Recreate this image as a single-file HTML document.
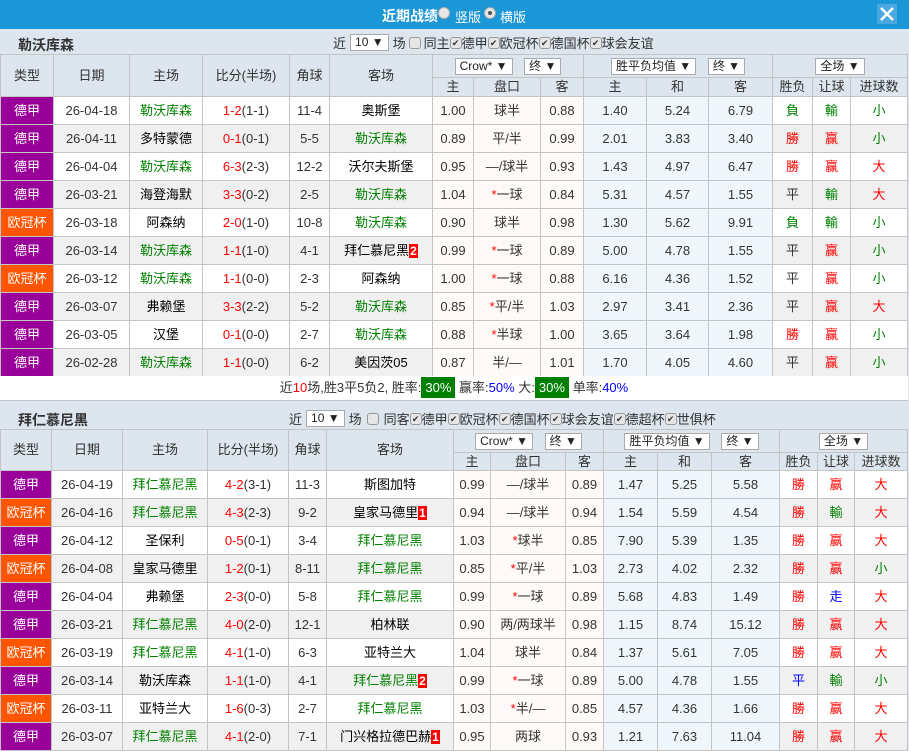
<!DOCTYPE html>
<html><head><meta charset="utf-8"><style>
*{margin:0;padding:0;box-sizing:border-box}
body{width:909px;height:750px;overflow:hidden;background:#dde5ee;font-family:"Liberation Sans","Noto Sans CJK SC",sans-serif;font-size:13px;color:#333;position:relative}
.top{position:absolute;left:0;top:0;width:909px;height:29px;background:#1b96d6;color:#fff}
.ttl{position:absolute;left:382px;top:6px;font-weight:bold;font-size:14px}
.rad{position:absolute;top:7px;width:12px;height:12px;border-radius:50%;background:#e8e8e8;border:1px solid #aaa}
.rad.on::after{content:"";position:absolute;left:3px;top:3px;width:4px;height:4px;border-radius:50%;background:#555}
.lbl{position:absolute;top:7px;font-size:13px}
.x{position:absolute;left:877px;top:4px;width:20px;height:20px;background:#4aa8e0}
.sec{position:absolute;left:0;width:909px}
.name{position:absolute;left:18px;font-weight:bold;font-size:14px;color:#333}
.ctl{position:absolute;font-size:13px;white-space:nowrap;display:flex;align-items:center}
.sel{display:inline-block;vertical-align:middle;background:#fff;border:1px solid #aaa;height:17px;line-height:15px;padding:0 4px;font-size:12px;margin:0 4px;color:#222}
.cb{display:inline-block;width:12px;height:12px;border:1px solid #999;border-radius:3px;background:#e6e6e6;vertical-align:middle;font-size:9px;line-height:10px;text-align:center;color:#333}
table{position:absolute;left:0;border-collapse:collapse;table-layout:fixed;width:908px}
td{border:1px solid #c4c4c4;text-align:center;padding:0;white-space:nowrap;overflow:hidden;line-height:15px}
.h td{background:#dde5ee;color:#333;line-height:14px}
tr.d{height:28px}
tr.d td{background:#fff}
tr.d.e td{background:#f0f0f0}
tr.d td.o1{background:#fffaf7}
tr.d td.o2{background:#f0f7fc}
tr.d td.lg{background:#990099;color:#fff}
tr.d td.lg.c{background:#ff5500}
.g{color:#008000}.r{color:#f00}.b{color:#00f}.k{color:#000}
.n{background:#f00;color:#fff;font-weight:bold;padding:0 1px;font-size:12px}
.sum{position:absolute;left:0;top:376px;width:908px;height:25px;background:#fff;border-bottom:1px solid #c4c4c4;text-align:center;line-height:24px}
.gb{background:#008000;color:#fff;padding:3px 4px}
</style></head><body>
<div class="top">
<span class="ttl">近期战绩</span>
<span class="rad" style="left:438px"></span><span class="lbl" style="left:455px">竖版</span>
<span class="rad on" style="left:484px"></span><span class="lbl" style="left:500px">横版</span>
<div class="x"><svg width="20" height="20"><path d="M4 4L16 16M16 4L4 16" stroke="#fff" stroke-width="2.5"/></svg></div>
</div>

<div class="sec" style="top:29px;height:25px">
<span class="name" style="top:6px">勒沃库森</span>
<div class="ctl" style="left:333px;top:4px">近<span class="sel">10 ▼</span>场 <span class="cb" style="margin:0 3px"></span>同主<span class="cb">✔</span>德甲<span class="cb">✔</span>欧冠杯<span class="cb">✔</span>德国杯<span class="cb">✔</span>球会友谊</div>
</div>

<table style="top:54px">
<colgroup><col width="53"><col width="76"><col width="73"><col width="87"><col width="40"><col width="103"><col width="41"><col width="67"><col width="43"><col width="63"><col width="62"><col width="64"><col width="40"><col width="38"><col width="57"></colgroup>
<tr class="h" style="height:23px"><td rowspan="2">类型</td><td rowspan="2">日期</td><td rowspan="2">主场</td><td rowspan="2">比分(半场)</td><td rowspan="2">角球</td><td rowspan="2">客场</td><td colspan="3"><span class="sel">Crow* ▼</span> <span class="sel">终 ▼</span></td><td colspan="3"><span class="sel">胜平负均值 ▼</span> <span class="sel">终 ▼</span></td><td colspan="3"><span class="sel">全场 ▼</span></td></tr>
<tr class="h" style="height:19px"><td>主</td><td>盘口</td><td>客</td><td>主</td><td>和</td><td>客</td><td>胜负</td><td>让球</td><td>进球数</td></tr>
<tr class="d"><td class="lg">德甲</td><td>26-04-18</td><td class="g">勒沃库森</td><td><span class="r">1-2</span>(1-1)</td><td>11-4</td><td class="k">奥斯堡</td><td class="o1">1.00</td><td class="o1">球半</td><td class="o1">0.88</td><td class="o2">1.40</td><td class="o2">5.24</td><td class="o2">6.79</td><td class="g">負</td><td class="g">輸</td><td class="g">小</td></tr>
<tr class="d e"><td class="lg">德甲</td><td>26-04-11</td><td class="k">多特蒙德</td><td><span class="r">0-1</span>(0-1)</td><td>5-5</td><td class="g">勒沃库森</td><td class="o1">0.89</td><td class="o1">平/半</td><td class="o1">0.99</td><td class="o2">2.01</td><td class="o2">3.83</td><td class="o2">3.40</td><td class="r">勝</td><td class="r">赢</td><td class="g">小</td></tr>
<tr class="d"><td class="lg">德甲</td><td>26-04-04</td><td class="g">勒沃库森</td><td><span class="r">6-3</span>(2-3)</td><td>12-2</td><td class="k">沃尔夫斯堡</td><td class="o1">0.95</td><td class="o1">—/球半</td><td class="o1">0.93</td><td class="o2">1.43</td><td class="o2">4.97</td><td class="o2">6.47</td><td class="r">勝</td><td class="r">赢</td><td class="r">大</td></tr>
<tr class="d e"><td class="lg">德甲</td><td>26-03-21</td><td class="k">海登海默</td><td><span class="r">3-3</span>(0-2)</td><td>2-5</td><td class="g">勒沃库森</td><td class="o1">1.04</td><td class="o1"><span class="r">*</span>一球</td><td class="o1">0.84</td><td class="o2">5.31</td><td class="o2">4.57</td><td class="o2">1.55</td><td>平</td><td class="g">輸</td><td class="r">大</td></tr>
<tr class="d"><td class="lg c">欧冠杯</td><td>26-03-18</td><td class="k">阿森纳</td><td><span class="r">2-0</span>(1-0)</td><td>10-8</td><td class="g">勒沃库森</td><td class="o1">0.90</td><td class="o1">球半</td><td class="o1">0.98</td><td class="o2">1.30</td><td class="o2">5.62</td><td class="o2">9.91</td><td class="g">負</td><td class="g">輸</td><td class="g">小</td></tr>
<tr class="d e"><td class="lg">德甲</td><td>26-03-14</td><td class="g">勒沃库森</td><td><span class="r">1-1</span>(1-0)</td><td>4-1</td><td class="k">拜仁慕尼黑<span class="n">2</span></td><td class="o1">0.99</td><td class="o1"><span class="r">*</span>一球</td><td class="o1">0.89</td><td class="o2">5.00</td><td class="o2">4.78</td><td class="o2">1.55</td><td>平</td><td class="r">赢</td><td class="g">小</td></tr>
<tr class="d"><td class="lg c">欧冠杯</td><td>26-03-12</td><td class="g">勒沃库森</td><td><span class="r">1-1</span>(0-0)</td><td>2-3</td><td class="k">阿森纳</td><td class="o1">1.00</td><td class="o1"><span class="r">*</span>一球</td><td class="o1">0.88</td><td class="o2">6.16</td><td class="o2">4.36</td><td class="o2">1.52</td><td>平</td><td class="r">赢</td><td class="g">小</td></tr>
<tr class="d e"><td class="lg">德甲</td><td>26-03-07</td><td class="k">弗赖堡</td><td><span class="r">3-3</span>(2-2)</td><td>5-2</td><td class="g">勒沃库森</td><td class="o1">0.85</td><td class="o1"><span class="r">*</span>平/半</td><td class="o1">1.03</td><td class="o2">2.97</td><td class="o2">3.41</td><td class="o2">2.36</td><td>平</td><td class="r">赢</td><td class="r">大</td></tr>
<tr class="d"><td class="lg">德甲</td><td>26-03-05</td><td class="k">汉堡</td><td><span class="r">0-1</span>(0-0)</td><td>2-7</td><td class="g">勒沃库森</td><td class="o1">0.88</td><td class="o1"><span class="r">*</span>半球</td><td class="o1">1.00</td><td class="o2">3.65</td><td class="o2">3.64</td><td class="o2">1.98</td><td class="r">勝</td><td class="r">赢</td><td class="g">小</td></tr>
<tr class="d e"><td class="lg">德甲</td><td>26-02-28</td><td class="g">勒沃库森</td><td><span class="r">1-1</span>(0-0)</td><td>6-2</td><td class="k">美因茨05</td><td class="o1">0.87</td><td class="o1">半/—</td><td class="o1">1.01</td><td class="o2">1.70</td><td class="o2">4.05</td><td class="o2">4.60</td><td>平</td><td class="r">赢</td><td class="g">小</td></tr>
</table>

<div class="sum">近<span class="r">10</span>场,胜3平5负2, 胜率:<span class="gb">30%</span> 赢率:<span class="b">50%</span> 大:<span class="gb">30%</span> 单率:<span class="b">40%</span></div>

<div class="sec" style="top:402px;height:27px">
<span class="name" style="top:8px">拜仁慕尼黑</span>
<div class="ctl" style="left:289px;top:7px">近<span class="sel">10 ▼</span>场 <span class="cb" style="margin:0 5px"></span>同客 <span class="cb">✔</span>德甲<span class="cb">✔</span>欧冠杯<span class="cb">✔</span>德国杯<span class="cb">✔</span>球会友谊<span class="cb">✔</span>德超杯<span class="cb">✔</span>世俱杯</div>
</div>

<table style="top:429px">
<colgroup><col width="51"><col width="71"><col width="85"><col width="81"><col width="38"><col width="127"><col width="37"><col width="75"><col width="38"><col width="54"><col width="54"><col width="68"><col width="38"><col width="37"><col width="53"></colgroup>
<tr class="h" style="height:23px"><td rowspan="2">类型</td><td rowspan="2">日期</td><td rowspan="2">主场</td><td rowspan="2">比分(半场)</td><td rowspan="2">角球</td><td rowspan="2">客场</td><td colspan="3"><span class="sel">Crow* ▼</span> <span class="sel">终 ▼</span></td><td colspan="3"><span class="sel">胜平负均值 ▼</span> <span class="sel">终 ▼</span></td><td colspan="3"><span class="sel">全场 ▼</span></td></tr>
<tr class="h" style="height:18px"><td>主</td><td>盘口</td><td>客</td><td>主</td><td>和</td><td>客</td><td>胜负</td><td>让球</td><td>进球数</td></tr>
<tr class="d"><td class="lg">德甲</td><td>26-04-19</td><td class="g">拜仁慕尼黑</td><td><span class="r">4-2</span>(3-1)</td><td>11-3</td><td class="k">斯图加特</td><td class="o1">0.99</td><td class="o1">—/球半</td><td class="o1">0.89</td><td class="o2">1.47</td><td class="o2">5.25</td><td class="o2">5.58</td><td class="r">勝</td><td class="r">赢</td><td class="r">大</td></tr>
<tr class="d e"><td class="lg c">欧冠杯</td><td>26-04-16</td><td class="g">拜仁慕尼黑</td><td><span class="r">4-3</span>(2-3)</td><td>9-2</td><td class="k">皇家马德里<span class="n">1</span></td><td class="o1">0.94</td><td class="o1">—/球半</td><td class="o1">0.94</td><td class="o2">1.54</td><td class="o2">5.59</td><td class="o2">4.54</td><td class="r">勝</td><td class="g">輸</td><td class="r">大</td></tr>
<tr class="d"><td class="lg">德甲</td><td>26-04-12</td><td class="k">圣保利</td><td><span class="r">0-5</span>(0-1)</td><td>3-4</td><td class="g">拜仁慕尼黑</td><td class="o1">1.03</td><td class="o1"><span class="r">*</span>球半</td><td class="o1">0.85</td><td class="o2">7.90</td><td class="o2">5.39</td><td class="o2">1.35</td><td class="r">勝</td><td class="r">赢</td><td class="r">大</td></tr>
<tr class="d e"><td class="lg c">欧冠杯</td><td>26-04-08</td><td class="k">皇家马德里</td><td><span class="r">1-2</span>(0-1)</td><td>8-11</td><td class="g">拜仁慕尼黑</td><td class="o1">0.85</td><td class="o1"><span class="r">*</span>平/半</td><td class="o1">1.03</td><td class="o2">2.73</td><td class="o2">4.02</td><td class="o2">2.32</td><td class="r">勝</td><td class="r">赢</td><td class="g">小</td></tr>
<tr class="d"><td class="lg">德甲</td><td>26-04-04</td><td class="k">弗赖堡</td><td><span class="r">2-3</span>(0-0)</td><td>5-8</td><td class="g">拜仁慕尼黑</td><td class="o1">0.99</td><td class="o1"><span class="r">*</span>一球</td><td class="o1">0.89</td><td class="o2">5.68</td><td class="o2">4.83</td><td class="o2">1.49</td><td class="r">勝</td><td class="b">走</td><td class="r">大</td></tr>
<tr class="d e"><td class="lg">德甲</td><td>26-03-21</td><td class="g">拜仁慕尼黑</td><td><span class="r">4-0</span>(2-0)</td><td>12-1</td><td class="k">柏林联</td><td class="o1">0.90</td><td class="o1">两/两球半</td><td class="o1">0.98</td><td class="o2">1.15</td><td class="o2">8.74</td><td class="o2">15.12</td><td class="r">勝</td><td class="r">赢</td><td class="r">大</td></tr>
<tr class="d"><td class="lg c">欧冠杯</td><td>26-03-19</td><td class="g">拜仁慕尼黑</td><td><span class="r">4-1</span>(1-0)</td><td>6-3</td><td class="k">亚特兰大</td><td class="o1">1.04</td><td class="o1">球半</td><td class="o1">0.84</td><td class="o2">1.37</td><td class="o2">5.61</td><td class="o2">7.05</td><td class="r">勝</td><td class="r">赢</td><td class="r">大</td></tr>
<tr class="d e"><td class="lg">德甲</td><td>26-03-14</td><td class="k">勒沃库森</td><td><span class="r">1-1</span>(1-0)</td><td>4-1</td><td class="g">拜仁慕尼黑<span class="n">2</span></td><td class="o1">0.99</td><td class="o1"><span class="r">*</span>一球</td><td class="o1">0.89</td><td class="o2">5.00</td><td class="o2">4.78</td><td class="o2">1.55</td><td class="b">平</td><td class="g">輸</td><td class="g">小</td></tr>
<tr class="d"><td class="lg c">欧冠杯</td><td>26-03-11</td><td class="k">亚特兰大</td><td><span class="r">1-6</span>(0-3)</td><td>2-7</td><td class="g">拜仁慕尼黑</td><td class="o1">1.03</td><td class="o1"><span class="r">*</span>半/—</td><td class="o1">0.85</td><td class="o2">4.57</td><td class="o2">4.36</td><td class="o2">1.66</td><td class="r">勝</td><td class="r">赢</td><td class="r">大</td></tr>
<tr class="d e"><td class="lg">德甲</td><td>26-03-07</td><td class="g">拜仁慕尼黑</td><td><span class="r">4-1</span>(2-0)</td><td>7-1</td><td class="k">门兴格拉德巴赫<span class="n">1</span></td><td class="o1">0.95</td><td class="o1">两球</td><td class="o1">0.93</td><td class="o2">1.21</td><td class="o2">7.63</td><td class="o2">11.04</td><td class="r">勝</td><td class="r">赢</td><td class="r">大</td></tr>
</table>
</body></html>
